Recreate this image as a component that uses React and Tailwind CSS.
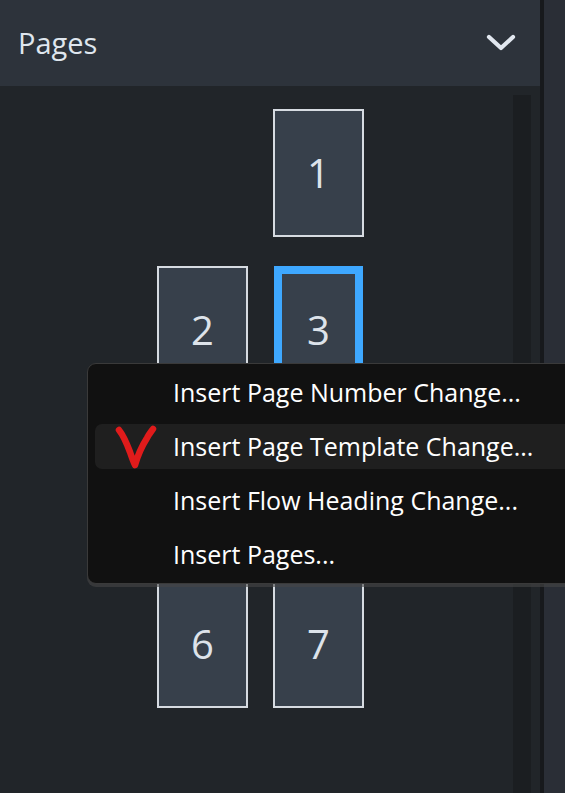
const FONT = { fontFamily: '"Open Sans", "Noto Sans", sans-serif' };

// pages 4 and 5 sit under the context menu
const ROWS = [
  [null, 1],
  [2, 3],
  [4, 5],
  [6, 7],
];
const HIDDEN = [4, 5];

const MENU = [
  "Insert Page Number Change...",
  "Insert Page Template Change...",
  "Insert Flow Heading Change...",
  "Insert Pages...",
];

function Page({ n }) {
  if (n === null) return <div />;
  const selected = n === 3;
  return (
    <div
      className={`flex items-center justify-center bg-[#37404b] text-[40px] text-[#dde3ea] ${
        selected ? "border-[8px] border-[#3ea8ff] mx-[1px]" : "border-2 border-[#d6dbe1]"
      }`}
    >
      {!HIDDEN.includes(n) && <span className="leading-none">{n}</span>}
    </div>
  );
}

function RedCheck() {
  return (
    <svg width="46" height="46" viewBox="0 0 46 46" fill="none">
      <path
        d="M5 6 C 9 11, 13 20, 16 28 C 18 34, 20 39, 21 41 C 23 34, 28 22, 33 14 C 35 10, 37 8, 39 5"
        stroke="#e01b1b"
        strokeWidth="6.5"
        strokeLinecap="round"
        strokeLinejoin="round"
      />
    </svg>
  );
}

export default function App() {
  return (
    <div className="relative w-[565px] h-[793px] overflow-hidden flex" style={FONT}>
      <div className="w-[540px] flex flex-col">
        <div className="h-[86px] shrink-0 bg-[#2d333b] flex items-center justify-between pl-[18px] pr-[24px]">
          <span className="text-[29px] text-[#dfe6ee] leading-none -mt-[2px]">Pages</span>
          <svg width="30" height="18" viewBox="0 0 30 18" fill="none">
            <path d="M3 3 L15 14 L27 3" stroke="#e1e7ef" strokeWidth="4.2" strokeLinecap="round" strokeLinejoin="round" />
          </svg>
        </div>
        <div className="flex-1 flex bg-[#212529]">
          <div className="flex-1 pt-[23px] pl-[157px]">
            <div className="grid grid-cols-[91px_91px] auto-rows-[128px] gap-x-[25px] gap-y-[29px]">
              {ROWS.flat().map((n, i) => (
                <Page key={i} n={n} />
              ))}
            </div>
          </div>
          <div className="w-[18px] mt-[9px] bg-[#1b1e21]" />
          <div className="w-[9px]" />
        </div>
      </div>
      <div className="w-[4px] bg-[#17191c]" />
      <div className="flex-1 bg-[#2a2e36]" />

      <div className="absolute left-[87px] top-[363px] w-[520px] h-[221px] rounded-[9px] bg-[#111111] border border-[#3a3a3a] shadow-[0_3px_0_rgba(70,70,70,0.6)] px-[7px] py-[6px] flex flex-col gap-[9px]">
        {MENU.map((label, i) => (
          <div
            key={label}
            className={`h-[45px] shrink-0 flex items-center rounded-[7px] ${i === 1 ? "bg-[#1f1f1f]" : ""}`}
          >
            <div className="w-[78px] h-full flex items-center pl-[19px]">{i === 1 && <RedCheck />}</div>
            <span className="text-[25px] text-white leading-none whitespace-nowrap">{label}</span>
          </div>
        ))}
      </div>
    </div>
  );
}
